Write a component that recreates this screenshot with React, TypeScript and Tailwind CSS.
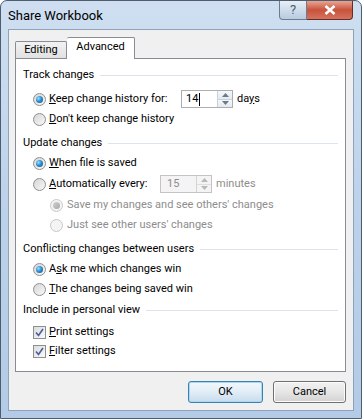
import React from 'react';

const font = { fontFamily: 'Roboto, "Liberation Sans", Arial, sans-serif' };

// Windows 7 style radio button
const Radio: React.FC<{ checked?: boolean; disabled?: boolean }> = ({ checked, disabled }) => (
    <span
        className={`relative flex h-[13px] w-[13px] shrink-0 items-center justify-center rounded-full border ${
            disabled ? 'border-[#c8c8c8] bg-[#f4f4f4]' : 'border-[#8e8f8f] bg-gradient-to-br from-[#d6d6d6] to-[#f8f8f8]'
        }`}
    >
        {checked && (
            <span
                className={`h-[7px] w-[7px] rounded-full ${
                    disabled
                        ? 'bg-gradient-to-br from-[#d0d0d0] to-[#a8a8a8]'
                        : 'bg-[radial-gradient(circle_at_35%_35%,#9fdcff_0%,#2f8fd0_45%,#0d4f85_100%)]'
                }`}
            />
        )}
    </span>
);

const Check: React.FC = () => (
    <span className="flex h-[13px] w-[13px] shrink-0 items-center justify-center border border-[#8e8f8f] bg-gradient-to-br from-[#dcdcdc] to-[#fafafa]">
        <svg width="9" height="9" viewBox="0 0 9 9">
            <path d="M1 4.5 L3.5 7.5 L8 1" stroke="#4a5f97" strokeWidth="1.6" fill="none" />
        </svg>
    </span>
);

const GroupHeader: React.FC<{ label: string; className?: string }> = ({ label, className = '' }) => (
    <div className={`flex h-[20px] items-center pl-[7px] pr-[7px] ${className}`}>
        <span className="text-black">{label}</span>
        <span className="ml-[6px] h-px flex-1 bg-[#dce3ea]" />
    </div>
);

const Spinner: React.FC<{ disabled?: boolean }> = ({ disabled }) => (
    <div className={`flex w-[15px] flex-col border-l ${disabled ? 'border-[#d4d4d4]' : 'border-[#c9d2dc]'}`}>
        <div className={`flex flex-1 items-center justify-center border-b ${disabled ? 'border-[#dedede] bg-[#f4f4f4]' : 'border-[#c9d2dc] bg-gradient-to-b from-[#f6f8fa] to-[#e4eaf0]'}`}>
            <svg width="7" height="4" viewBox="0 0 7 4"><path d="M0 4 L3.5 0 L7 4 Z" fill={disabled ? '#b8b8b8' : '#6d7a88'} /></svg>
        </div>
        <div className={`flex flex-1 items-center justify-center ${disabled ? 'bg-[#f4f4f4]' : 'bg-gradient-to-b from-[#f6f8fa] to-[#e4eaf0]'}`}>
            <svg width="7" height="4" viewBox="0 0 7 4"><path d="M0 0 L7 0 L3.5 4 Z" fill={disabled ? '#b8b8b8' : '#6d7a88'} /></svg>
        </div>
    </div>
);

const App: React.FC = () => {
    return (
        <div
            style={font}
            className="flex h-[419px] w-[362px] flex-col overflow-hidden rounded-t-[7px] border border-[#4d5d70] bg-gradient-to-b from-[#cfdff1] via-[#bcd2ea] to-[#b3cbe6] text-[11px] text-black"
        >
            {/* Title bar */}
            <div className="flex h-[28px] shrink-0 items-start">
                <span className="mt-[5px] pl-[7px] text-[13px] text-black">Share Workbook</span>
                <div className="ml-auto mr-[8px] flex h-[19px]">
                    <div className="flex w-[28px] items-center justify-center rounded-bl-[4px] border border-t-0 border-[#6d7c90] bg-gradient-to-b from-[#e8eff7] via-[#cfdcea] to-[#b9cbe0] text-[13px] text-[#4f5f72]">
                        ?
                    </div>
                    <div className="flex w-[46px] items-center justify-center rounded-br-[4px] border border-l-0 border-t-0 border-[#6b2b22] bg-gradient-to-b from-[#e8a493] via-[#c9523a] to-[#d27360]">
                        <svg width="12" height="10" viewBox="0 0 12 10">
                            <path d="M1.5 1 L10.5 9 M10.5 1 L1.5 9" stroke="#ffffff" strokeWidth="2.6" />
                        </svg>
                    </div>
                </div>
            </div>

            {/* Client area */}
            <div className="mx-[7px] mb-[7px] flex flex-1 flex-col border border-[#8ea2ba] bg-[#f0f0f0]">
                {/* Tabs */}
                <div className="ml-[6px] mt-[6px] flex h-[22px] items-end">
                    <div className="flex h-[17px] w-[52px] items-center justify-center rounded-t-[2px] border border-b-0 border-[#898c95] bg-gradient-to-b from-[#f2f2f2] to-[#e1e1e1] pt-[1px]">
                        Editing
                    </div>
                    <div className="relative -mb-px flex h-[22px] w-[68px] items-center justify-center rounded-t-[2px] border border-b-0 border-l-0 border-[#898c95] bg-white pb-[2px]">
                        Advanced
                    </div>
                </div>

                {/* Panel */}
                <div className="ml-[6px] mr-[7px] flex h-[314px] flex-col border border-[#898c95] bg-white pt-[6px]">
                    <GroupHeader label="Track changes" />
                    <div className="mt-[4px] flex h-[20px] items-center pl-[17px]">
                        <Radio checked />
                        <span className="ml-[3px] w-[132px]"><u>K</u>eep change history for:</span>
                        <div className="flex h-[18px] w-[52px] border border-[#abadb3] bg-white">
                            <div className="flex flex-1 items-center pl-[4px]">
                                14<span className="ml-px h-[13px] w-px bg-black" />
                            </div>
                            <Spinner />
                        </div>
                        <span className="ml-[4px]">da<u>y</u>s</span>
                    </div>
                    <div className="flex h-[20px] items-center pl-[17px]">
                        <Radio />
                        <span className="ml-[3px]"><u>D</u>on't keep change history</span>
                    </div>

                    <GroupHeader label="Update changes" className="mt-[4px]" />
                    <div className="flex h-[20px] items-center pl-[17px]">
                        <Radio checked />
                        <span className="ml-[3px]"><u>W</u>hen file is saved</span>
                    </div>
                    <div className="mt-px flex h-[20px] items-center pl-[17px]">
                        <Radio />
                        <span className="ml-[3px] w-[111px]"><u>A</u>utomatically every:</span>
                        <div className="flex h-[18px] w-[52px] border border-[#c4c4c4] bg-[#f4f4f4] text-[#8d8d8d]">
                            <div className="flex flex-1 items-center pl-[6px]">15</div>
                            <Spinner disabled />
                        </div>
                        <span className="ml-[4px] text-[#8d8d8d]">minutes</span>
                    </div>
                    <div className="mt-px flex h-[20px] items-center pl-[34px] text-[#8d8d8d]">
                        <Radio checked disabled />
                        <span className="ml-[4px]">Save my changes and see others' changes</span>
                    </div>
                    <div className="flex h-[20px] items-center pl-[34px] text-[#8d8d8d]">
                        <Radio disabled />
                        <span className="ml-[4px]">Just see other users' changes</span>
                    </div>

                    <GroupHeader label="Conflicting changes between users" className="mt-[4px]" />
                    <div className="flex h-[20px] items-center pl-[17px]">
                        <Radio checked />
                        <span className="ml-[3px]">A<u>s</u>k me which changes win</span>
                    </div>
                    <div className="flex h-[20px] items-center pl-[17px]">
                        <Radio />
                        <span className="ml-[3px]"><u>T</u>he changes being saved win</span>
                    </div>

                    <GroupHeader label="Include in personal view" className="mt-px" />
                    <div className="mt-[3px] flex h-[18px] items-center pl-[17px]">
                        <Check />
                        <span className="ml-[3px]"><u>P</u>rint settings</span>
                    </div>
                    <div className="flex h-[20px] items-center pl-[17px]">
                        <Check />
                        <span className="ml-[3px]"><u>F</u>ilter settings</span>
                    </div>
                </div>

                {/* Buttons */}
                <div className="mr-[7px] mt-[9px] flex justify-end gap-[10px]">
                    <button className="h-[22px] w-[75px] rounded-[3px] border border-[#3c7fb1] bg-gradient-to-b from-[#f2f8fc] via-[#e1edf6] to-[#c8dcec] shadow-[inset_0_0_0_1px_#a8d8f2]">
                        OK
                    </button>
                    <button className="h-[22px] w-[73px] rounded-[3px] border border-[#707070] bg-gradient-to-b from-[#f2f2f2] via-[#e6e6e6] to-[#d2d2d2] shadow-[inset_0_0_0_1px_#fcfcfc]">
                        Cancel
                    </button>
                </div>
            </div>
        </div>
    );
};

export default App;
